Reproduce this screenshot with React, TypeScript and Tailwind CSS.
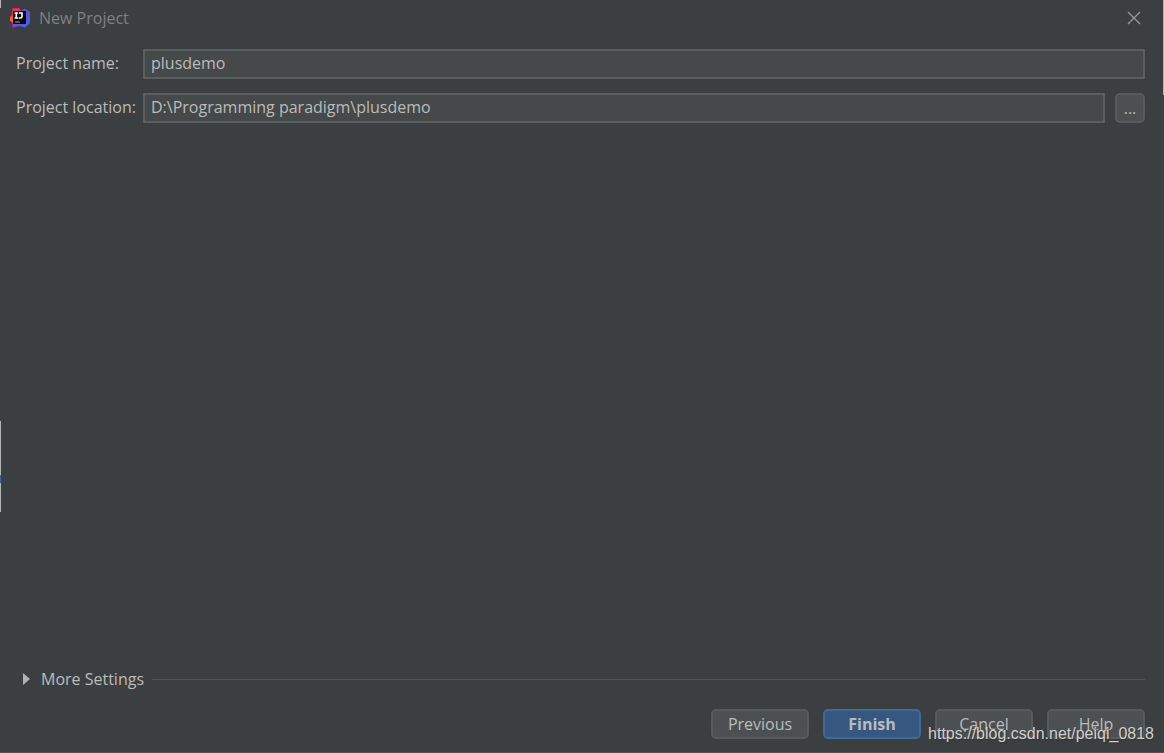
import { useState } from "react";

const fieldClass =
    "h-[30px] min-w-0 flex-1 border-2 border-[#5b5e5f] bg-[#45494a] px-1.5 pb-0.5 text-base text-[#bbbbbb] outline-none";
const buttonClass =
    "h-[30px] w-[98px] rounded-[5px] border-2 border-[#585b5c] bg-[#4c5052] text-base leading-6 text-[#bbbbbb]";

function IdeaLogo() {
    return (
        <svg className="h-5 w-5 shrink-0" viewBox="0 0 20 20" aria-hidden="true">
            <defs>
                <linearGradient id="idea-blue" x1="0" y1="1" x2="1" y2="0">
                    <stop offset="0" stopColor="#b32fc0" />
                    <stop offset="0.4" stopColor="#3468f0" />
                    <stop offset="1" stopColor="#7049c9" />
                </linearGradient>
                <linearGradient id="idea-red" x1="0" y1="1" x2="0.6" y2="0">
                    <stop offset="0" stopColor="#f97a22" />
                    <stop offset="0.5" stopColor="#fb3a4b" />
                    <stop offset="1" stopColor="#f52a6b" />
                </linearGradient>
            </defs>
            <path d="M11 3 14.5.5 20 4v11l-5 4.5-6-1.5-6.5 1.5L2 14z" fill="url(#idea-blue)" />
            <path d="M2.5.5 9 0l3 4-2 8-7.5 2.5L0 12.5V9l2-2z" fill="url(#idea-red)" />
            <rect x="3" y="3" width="13" height="13" fill="#0b080b" />
            <path
                d="M4.5 5h3.6M4.5 10h3.6M6.3 5v5M9 5h3v3.5q0 1.5-1.5 1.5H8.8"
                fill="none"
                stroke="#fff"
                strokeWidth="1.6"
            />
            <path d="M5 14h5" stroke="#9a9a9a" strokeWidth="1.1" />
        </svg>
    );
}

export default function App() {
    const [name, setName] = useState("plusdemo");
    const [location, setLocation] = useState("D:\\Programming paradigm\\plusdemo");

    return (
        <div className="relative flex min-h-screen flex-col overflow-hidden bg-[#3c3f41] font-['Open_Sans','Noto_Sans',sans-serif] text-base text-[#bbbbbb]">
            {/* Title bar */}
            <header className="flex h-9 items-center justify-between pr-[23px] pl-2.5">
                <div className="flex items-center gap-[9px]">
                    <IdeaLogo />
                    <h1 className="text-base text-[#7f8182]">New Project</h1>
                </div>
                <button type="button" aria-label="Close">
                    <svg className="h-3.5 w-3.5" viewBox="0 0 14 14" fill="none" stroke="#999b9c" strokeWidth="1.2">
                        <path d="M1 1l12 12M13 1 1 13" />
                    </svg>
                </button>
            </header>

            {/* Project fields */}
            <main className="flex flex-1 flex-col gap-3.5 pt-[13px] pr-[19px] pl-4">
                <div className="flex items-center">
                    <label htmlFor="name" className="w-[127px] shrink-0 pb-0.5 whitespace-nowrap">Project name:</label>
                    <input id="name" className={fieldClass} value={name} onChange={(e) => setName(e.target.value)} />
                </div>
                <div className="flex items-center">
                    <label htmlFor="location" className="w-[127px] shrink-0 pb-0.5 whitespace-nowrap">Project location:</label>
                    <input id="location" className={fieldClass} value={location} onChange={(e) => setLocation(e.target.value)} />
                    <button
                        type="button"
                        aria-label="Browse"
                        className="ml-2.5 h-[30px] w-[30px] rounded-[5px] border-2 border-[#585b5c] bg-[#4c5052] text-base leading-6"
                    >
                        ...
                    </button>
                </div>
            </main>

            <footer className="pr-[19px] pb-3.5 pl-[23px]">
                <div className="flex items-center gap-2">
                    <button type="button" aria-expanded="false" className="flex items-center gap-[11px] whitespace-nowrap">
                        <svg className="h-3 w-[7px]" viewBox="0 0 7 12" fill="#afb1b3" aria-hidden="true">
                            <path d="M0 0l7 6-7 6z" />
                        </svg>
                        More Settings
                    </button>
                    <div className="h-px flex-1 bg-[#515557]" />
                </div>
                <div className="mt-[18px] flex justify-end gap-3.5">
                    <button type="button" className={buttonClass}>Previous</button>
                    <button
                        type="button"
                        className="h-[30px] w-[98px] rounded-[5px] border-2 border-[#426994] bg-[#365880] text-base leading-6 font-bold text-[#bbbbbb]"
                    >
                        Finish
                    </button>
                    <button type="button" className={buttonClass}>Cancel</button>
                    <button type="button" className={buttonClass}>Help</button>
                </div>
            </footer>

            {/* Watermark */}
            <p className="pointer-events-none absolute right-2.5 bottom-[7px] font-['Liberation_Sans',Arial,sans-serif] text-base text-[#d0d0d0] [text-shadow:1px_1px_1px_#333333]">
                https://blog.csdn.net/peiqi_0818
            </p>

            {/* Windows showing behind the dialog */}
            <div className="absolute top-0 left-0 h-2 w-px bg-[#b5b5b5]" />
            <div className="absolute top-[421px] left-0 h-[91px] w-px bg-[#b5b5b5]" />
            <div className="absolute top-[475px] left-0 h-2 w-px bg-[#3f5f9f]" />
            <div className="absolute top-0 right-0 h-[95px] w-px bg-[#b5b5b5]" />
            <div className="absolute bottom-0 left-0 h-px w-full bg-[#525557]" />
        </div>
    );
}
